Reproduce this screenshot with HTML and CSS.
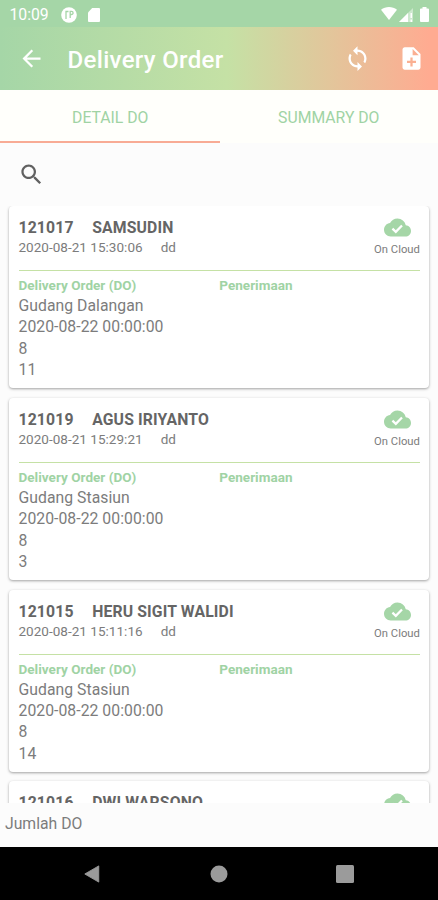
FILE: index.html
```html
<!DOCTYPE html>
<html lang="id">
<head>
<meta charset="utf-8">
<title>Delivery Order</title>
<link rel="stylesheet" href="styles.css">
</head>
<body>
<svg class="defs" width="0" height="0">
  <symbol id="cloud" viewBox="0 0 24 24"><path d="M19.35 10.04C18.67 6.59 15.64 4 12 4 9.11 4 6.6 5.64 5.35 8.04 2.34 8.36 0 10.91 0 14c0 3.31 2.69 6 6 6h13c2.76 0 5-2.24 5-5 0-2.64-2.05-4.78-4.65-4.96z"/><path d="M7.500 13l3 2.900 5.500-5.700" fill="none" stroke="#fff" stroke-width="2"/></symbol>
</svg>
<div class="screen">
  <div class="status">
    <span class="clock">10:09</span>
    <svg class="status-app" viewBox="0 0 16 16"><circle cx="8" cy="8" r="7.8" fill="#fff"/><path d="M5 12V4.500h2.500M9.200 11V4.300h1.300a1.500 1.500 0 0 1 0 3.200H9.200" fill="none" stroke="#a5d6a7" stroke-width="1.300"/></svg>
    <svg class="status-sd" viewBox="0 0 12 14"><path d="M4.2 0H11a1 1 0 0 1 1 1v12a1 1 0 0 1-1 1H1a1 1 0 0 1-1-1V4.4z" fill="#fff"/></svg>
    <svg class="status-wifi" viewBox="0 0 16 13"><path d="M0 2.8C4.5-.9 11.500-.9 16 2.800L8 13z" fill="#fff"/></svg>
    <svg class="status-signal" viewBox="0 0 14 14"><path d="M0 14L14 0v14z" fill="#fff" opacity=".45"/><path d="M0 14L9 5v9zM11.500 5H13v5h-1.500zM11.500 11.500H13V14h-1.500z" fill="#fff"/></svg>
    <svg class="status-battery" viewBox="0 0 9 15"><path d="M2.500 0h4v1.500H8a1 1 0 0 1 1 1V14a1 1 0 0 1-1 1H1a1 1 0 0 1-1-1V2.500a1 1 0 0 1 1-1h1.500z" fill="#fff"/></svg>
  </div>
  <header class="appbar">
    <svg class="icon back" viewBox="0 0 24 24"><path d="M20 11H7.830l5.590-5.590L12 4l-8 8 8 8 1.410-1.410L7.830 13H20v-2z"/></svg>
    <h1>Delivery Order</h1>
    <svg class="icon sync" viewBox="0 0 24 24"><path d="M12 4V1L8 5l4 4V6c3.310 0 6 2.690 6 6 0 1.010-.25 1.970-.7 2.800l1.460 1.460C19.540 15.030 20 13.570 20 12c0-4.420-3.580-8-8-8zm0 14c-3.310 0-6-2.690-6-6 0-1.010.25-1.970.7-2.800L5.240 7.740C4.460 8.970 4 10.430 4 12c0 4.420 3.580 8 8 8v3l4-4-4-4v3z"/></svg>
    <svg class="icon note" viewBox="0 0 24 24"><path d="M14 2H6c-1.100 0-1.990.9-1.990 2L4 20c0 1.100.89 2 1.990 2H18c1.100 0 2-.9 2-2V8l-6-6zm2 14h-3v3h-2v-3H8v-2h3v-3h2v3h3v2zm-3-7V3.500L18.500 9H13z"/></svg>
  </header>
  <nav class="tabs"><div class="tab active"><span>DETAIL DO</span></div><div class="tab"><span>SUMMARY DO</span></div></nav>
  <div class="search"><svg class="icon" viewBox="0 0 24 24"><path d="M15.500 14h-.79l-.28-.27C15.410 12.590 16 11.110 16 9.500 16 5.910 13.090 3 9.500 3S3 5.910 3 9.500 5.910 16 9.500 16c1.610 0 3.090-.59 4.230-1.570l.27.28v.79l5 4.990L20.490 19l-4.990-5zm-6 0C7.010 14 5 11.990 5 9.500S7.010 5 9.500 5 14 7.010 14 9.500 11.990 14 9.500 14z"/></svg></div>
  <main class="list">
    <article class="card">
      <div class="head"><div><div class="name"><b>121017</b><b>SAMSUDIN</b></div><div class="meta"><span>2020-08-21 15:30:06</span><span>dd</span></div></div><div class="cloud"><svg><use href="#cloud"/></svg><span>On Cloud</span></div></div>
      <div class="cols"><div><h2>Delivery Order (DO)</h2><p>Gudang Dalangan</p><p>2020-08-22 00:00:00</p><p>8</p><p>11</p></div><div><h2>Penerimaan</h2></div></div>
    </article>
    <article class="card">
      <div class="head"><div><div class="name"><b>121019</b><b>AGUS IRIYANTO</b></div><div class="meta"><span>2020-08-21 15:29:21</span><span>dd</span></div></div><div class="cloud"><svg><use href="#cloud"/></svg><span>On Cloud</span></div></div>
      <div class="cols"><div><h2>Delivery Order (DO)</h2><p>Gudang Stasiun</p><p>2020-08-22 00:00:00</p><p>8</p><p>3</p></div><div><h2>Penerimaan</h2></div></div>
    </article>
    <article class="card">
      <div class="head"><div><div class="name"><b>121015</b><b>HERU SIGIT WALIDI</b></div><div class="meta"><span>2020-08-21 15:11:16</span><span>dd</span></div></div><div class="cloud"><svg><use href="#cloud"/></svg><span>On Cloud</span></div></div>
      <div class="cols"><div><h2>Delivery Order (DO)</h2><p>Gudang Stasiun</p><p>2020-08-22 00:00:00</p><p>8</p><p>14</p></div><div><h2>Penerimaan</h2></div></div>
    </article>
    <article class="card">
      <div class="head"><div><div class="name"><b>121016</b><b>DWI WARSONO</b></div></div><div class="cloud"><svg><use href="#cloud"/></svg></div></div>
    </article>
  </main>
  <footer class="total">Jumlah DO</footer>
  <div class="navbar">
    <svg viewBox="0 0 18 20"><path d="M16.500 1L1 10l15.500 9z" stroke="#9b9b9b" stroke-linejoin="round"/></svg>
    <svg viewBox="0 0 18 18"><circle cx="9" cy="9" r="8.500"/></svg>
    <svg viewBox="0 0 18 18"><rect width="18" height="18" rx="1.500"/></svg>
  </div>
</div>
</body>
</html>
```
FILE: styles.css
```css
* { box-sizing: border-box; margin: 0; padding: 0; }
body { font-family: Roboto, sans-serif; background: #fcfcfc; color: #7c7c7c; }
.defs { display: block; height: 0; }
svg { flex: none; }
.screen { width: 438px; height: 900px; display: flex; flex-direction: column; overflow: hidden; }
.status { height: 27px; flex: none; background: #a5d6a7; display: flex; align-items: center; padding: 2px 9px 0 9.500px; color: #fff; }
.clock { width: 51.500px; font-size: 15.75px; line-height: 24px; }
.status-app { width: 16px; height: 16px; }
.status-sd { width: 12px; height: 14px; margin-left: 11px; }
.status-wifi { width: 16px; height: 13px; margin-left: auto; margin-bottom: 2px; }
.status-signal { width: 14px; height: 14px; margin-left: 2px; }
.status-battery { width: 9px; height: 15px; margin-left: 7px; }
.appbar { height: 63px; flex: none; display: flex; align-items: center; padding: 0 13px 0 18px; color: #fff; background: linear-gradient(90deg, #a5d6a7 0%, #c5e1a5 52%, #ffab91 98%); }
.icon { width: 27px; height: 27px; fill: currentColor; }
.appbar h1 { font-size: 24px; font-weight: 500; letter-spacing: .33px; margin-left: 22.500px; padding-top: 2px; white-space: nowrap; }
.sync { margin-left: auto; }
.note { margin-left: 27px; }
.tabs { height: 53px; flex: none; display: flex; background: #fffffb; }
.tab { flex: 1 1 0; width: 50%; display: flex; justify-content: center; align-items: center; padding-top: 3px; border-bottom: 2px solid transparent; font-size: 15.75px; color: #a0d3a4; }
.tab.active { border-bottom-color: #f8ab95; padding-left: 1px; }
.search { height: 63px; flex: none; display: flex; align-items: center; padding-left: 18px; color: #616161; }
.list { flex: 1; min-height: 0; overflow: hidden; padding: 0 9px; display: flex; flex-direction: column; gap: 9.8px; }
.card { height: 182px; flex: none; background: #fff; border-radius: 4px; padding: 11px 9px 0 9.500px; box-shadow: 0 1px 3px rgba(0,0,0,.3), 0 1px 2px rgba(0,0,0,.08); }
.head { height: 54px; display: flex; justify-content: space-between; border-bottom: 1px solid #c5e1a5; }
.name { display: flex; gap: 18.500px; font-size: 15.75px; line-height: 21px; letter-spacing: .15px; color: #656565; }
.meta { display: flex; gap: 18px; font-size: 13.5px; line-height: 18px; letter-spacing: .03px; }
.cloud { width: 46px; display: flex; flex-direction: column; align-items: center; white-space: nowrap; }
.cloud svg { width: 27px; height: 27px; fill: #a5d6a7; margin-top: -3px; }
.cloud span { font-size: 11.25px; line-height: 14px; margin-top: 2px; }
.cols { display: grid; grid-template-columns: 1fr 1fr; padding-top: 5px; }
.cols h2 { font-size: 13.5px; line-height: 18px; letter-spacing: .03px; margin-bottom: 1px; color: #a0d3a4; }
.cols p { font-size: 15.75px; line-height: 21.4px; letter-spacing: .04px; }
.total { height: 44px; flex: none; padding: 10px 5px; font-size: 15.75px; line-height: 21px; background: #fcfcfc; }
.navbar { height: 53px; flex: none; background: #000; display: flex; align-items: center; justify-content: space-between; padding: 0 84px 0 83px; }
.navbar svg { width: 18px; height: 18px; fill: #9b9b9b; }
```
